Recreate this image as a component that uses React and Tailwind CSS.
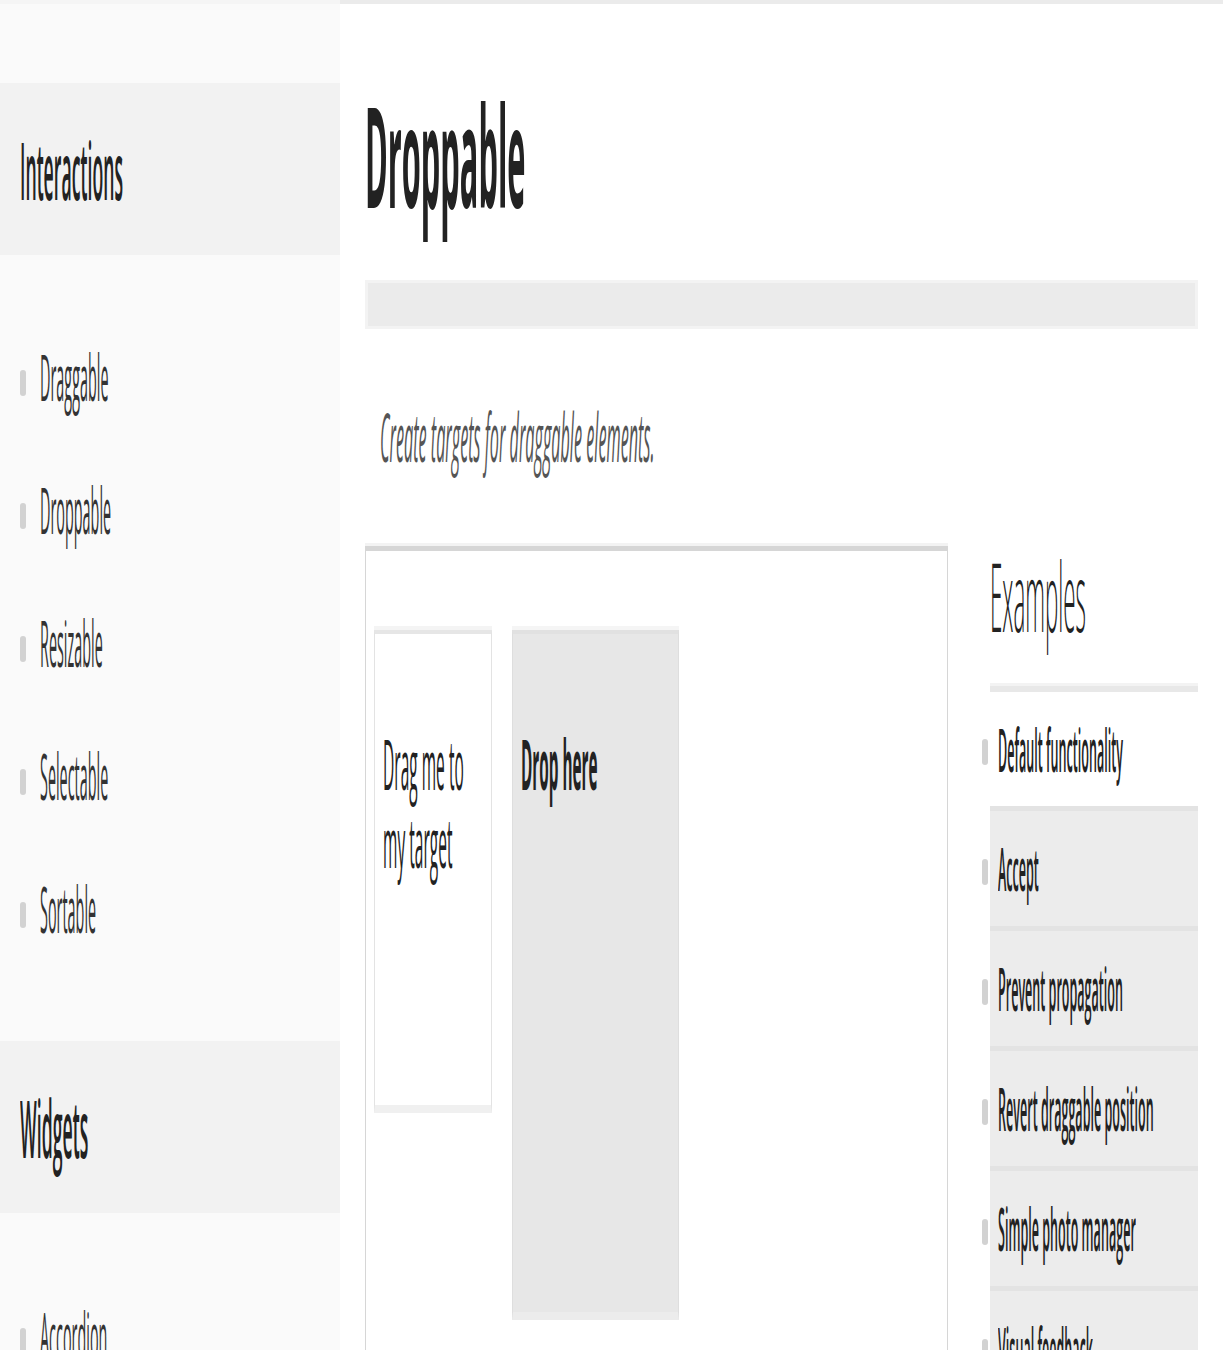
import React from 'react';

// squeezed text: the reference is rendered very narrow, so each label is scaled on x only
function Sq({ children, sx = 'scale-x-[0.23]', className = '' }) {
    return (
        <span className={`inline-block origin-left whitespace-nowrap leading-none ${sx} ${className}`}>
            {children}
        </span>
    );
}

function Dot({ className = '' }) {
    return <span className={`block w-[6px] h-[26px] shrink-0 rounded-full bg-[#d2d2d2] ${className}`} />;
}

const interactions = ['Draggable', 'Droppable', 'Resizable', 'Selectable', 'Sortable'];
const widgets = ['Accordion', 'Autocomplete', 'Button'];
const examples = ['Accept', 'Prevent propagation', 'Revert draggable position', 'Simple photo manager', 'Visual feedback'];

function NavBand({ label }) {
    return (
        <div className="h-[172px] bg-[#f2f2f2] flex items-center pl-[20px]">
            <Sq sx="scale-x-[0.221]" className="text-[80px] font-semibold text-[#222]">{label}</Sq>
        </div>
    );
}

function NavList({ items }) {
    return (
        <ul className="pt-[55px] pb-[66px]">
            {items.map(it => (
                <li key={it} className="h-[133px] flex items-center pl-[20px] gap-[14px]">
                    <Dot className="mt-[12px]" />
                    <Sq sx="scale-x-[0.225]" className="text-[64px] text-[#333]">{it}</Sq>
                </li>
            ))}
        </ul>
    );
}

function ExampleRow({ label, first }) {
    return (
        <li className={first ? 'h-[114px] flex items-center' : 'h-[120px] flex items-center bg-[#ececec] border-t-[5px] border-[#e3e3e3]'}>
            <div className="-ml-[8px] flex items-center gap-[10px]">
                <Dot className="mt-[6px]" />
                <Sq sx="scale-x-[0.213]" className="text-[59px] font-semibold text-[#222]">{label}</Sq>
            </div>
        </li>
    );
}

export default function App() {
    return (
        <div className="flex w-full min-h-[1350px] overflow-hidden bg-white font-['Open_Sans',sans-serif] text-[#333]">
            <aside className="w-[340px] shrink-0 bg-[#fafafa] border-t-4 border-[#f5f5f5]">
                <div className="h-[79px]" />
                <NavBand label="Interactions" />
                <NavList items={interactions} />
                <NavBand label="Widgets" />
                <NavList items={widgets} />
            </aside>

            <main className="flex-1 min-w-0 border-t-4 border-[#ebebeb] pl-[25px] pr-[25px]">
                <h1 className="mt-[80px] h-[142px] leading-none">
                    <Sq sx="scale-x-[0.22]" className="text-[140px] font-bold text-[#222]">Droppable</Sq>
                </h1>

                <div className="mt-[54px] h-[49px] bg-[#ebebeb] border-[3px] border-[#f3f3f3]" />

                <div className="h-[214px] flex items-center pl-[15px]">
                    <Sq sx="scale-x-[0.242]" className="text-[67px] italic text-[#555]">Create targets for draggable elements.</Sq>
                </div>

                <div className="flex items-start gap-[42px]">
                    <div className="w-[583px] shrink-0 h-[810px] mt-[3px] border-x border-[#d6d6d6] border-t-[5px] border-t-[#d6d6d6] shadow-[0_-3px_0_#f3f3f3] flex items-start gap-[20px] pt-[79px] pl-[8px]">
                        <div className="w-[118px] h-[483px] bg-white border-x border-[#e3e3e3] border-t-4 border-t-[#e6e6e6] border-b-[8px] border-b-[#f0f0f0] shadow-[0_-4px_0_#f4f4f4] pt-[90px] pl-[8px]">
                            <div className="h-[78px] flex items-center">
                                <Sq sx="scale-x-[0.222]" className="text-[70px] text-[#222]">Drag me to</Sq>
                            </div>
                            <div className="h-[78px] flex items-center">
                                <Sq sx="scale-x-[0.222]" className="text-[70px] text-[#222]">my target</Sq>
                            </div>
                        </div>
                        <div className="w-[167px] h-[690px] bg-[#e7e7e7] border-x border-[#dedede] border-t-4 border-t-[#e1e1e1] border-b-[8px] border-b-[#ececec] shadow-[0_-4px_0_#f5f5f5] pt-[90px] pl-[8px]">
                            <div className="h-[78px] flex items-center">
                                <Sq sx="scale-x-[0.219]" className="text-[70px] font-bold text-[#222]">Drop here</Sq>
                            </div>
                        </div>
                    </div>

                    <div className="w-[208px] min-w-0">
                        <h2 className="mt-[5px] h-[95px] leading-none">
                            <Sq sx="scale-x-[0.235]" className="text-[95px] font-light text-[#222]">Examples</Sq>
                        </h2>
                        <div className="mt-[40px] h-[9px] border-t-[3px] border-[#f3f3f3] bg-[#e8e8e8]" />
                        <ul>
                            <ExampleRow label="Default functionality" first />
                            {examples.map(ex => <ExampleRow key={ex} label={ex} />)}
                        </ul>
                    </div>
                </div>
            </main>
        </div>
    );
}
